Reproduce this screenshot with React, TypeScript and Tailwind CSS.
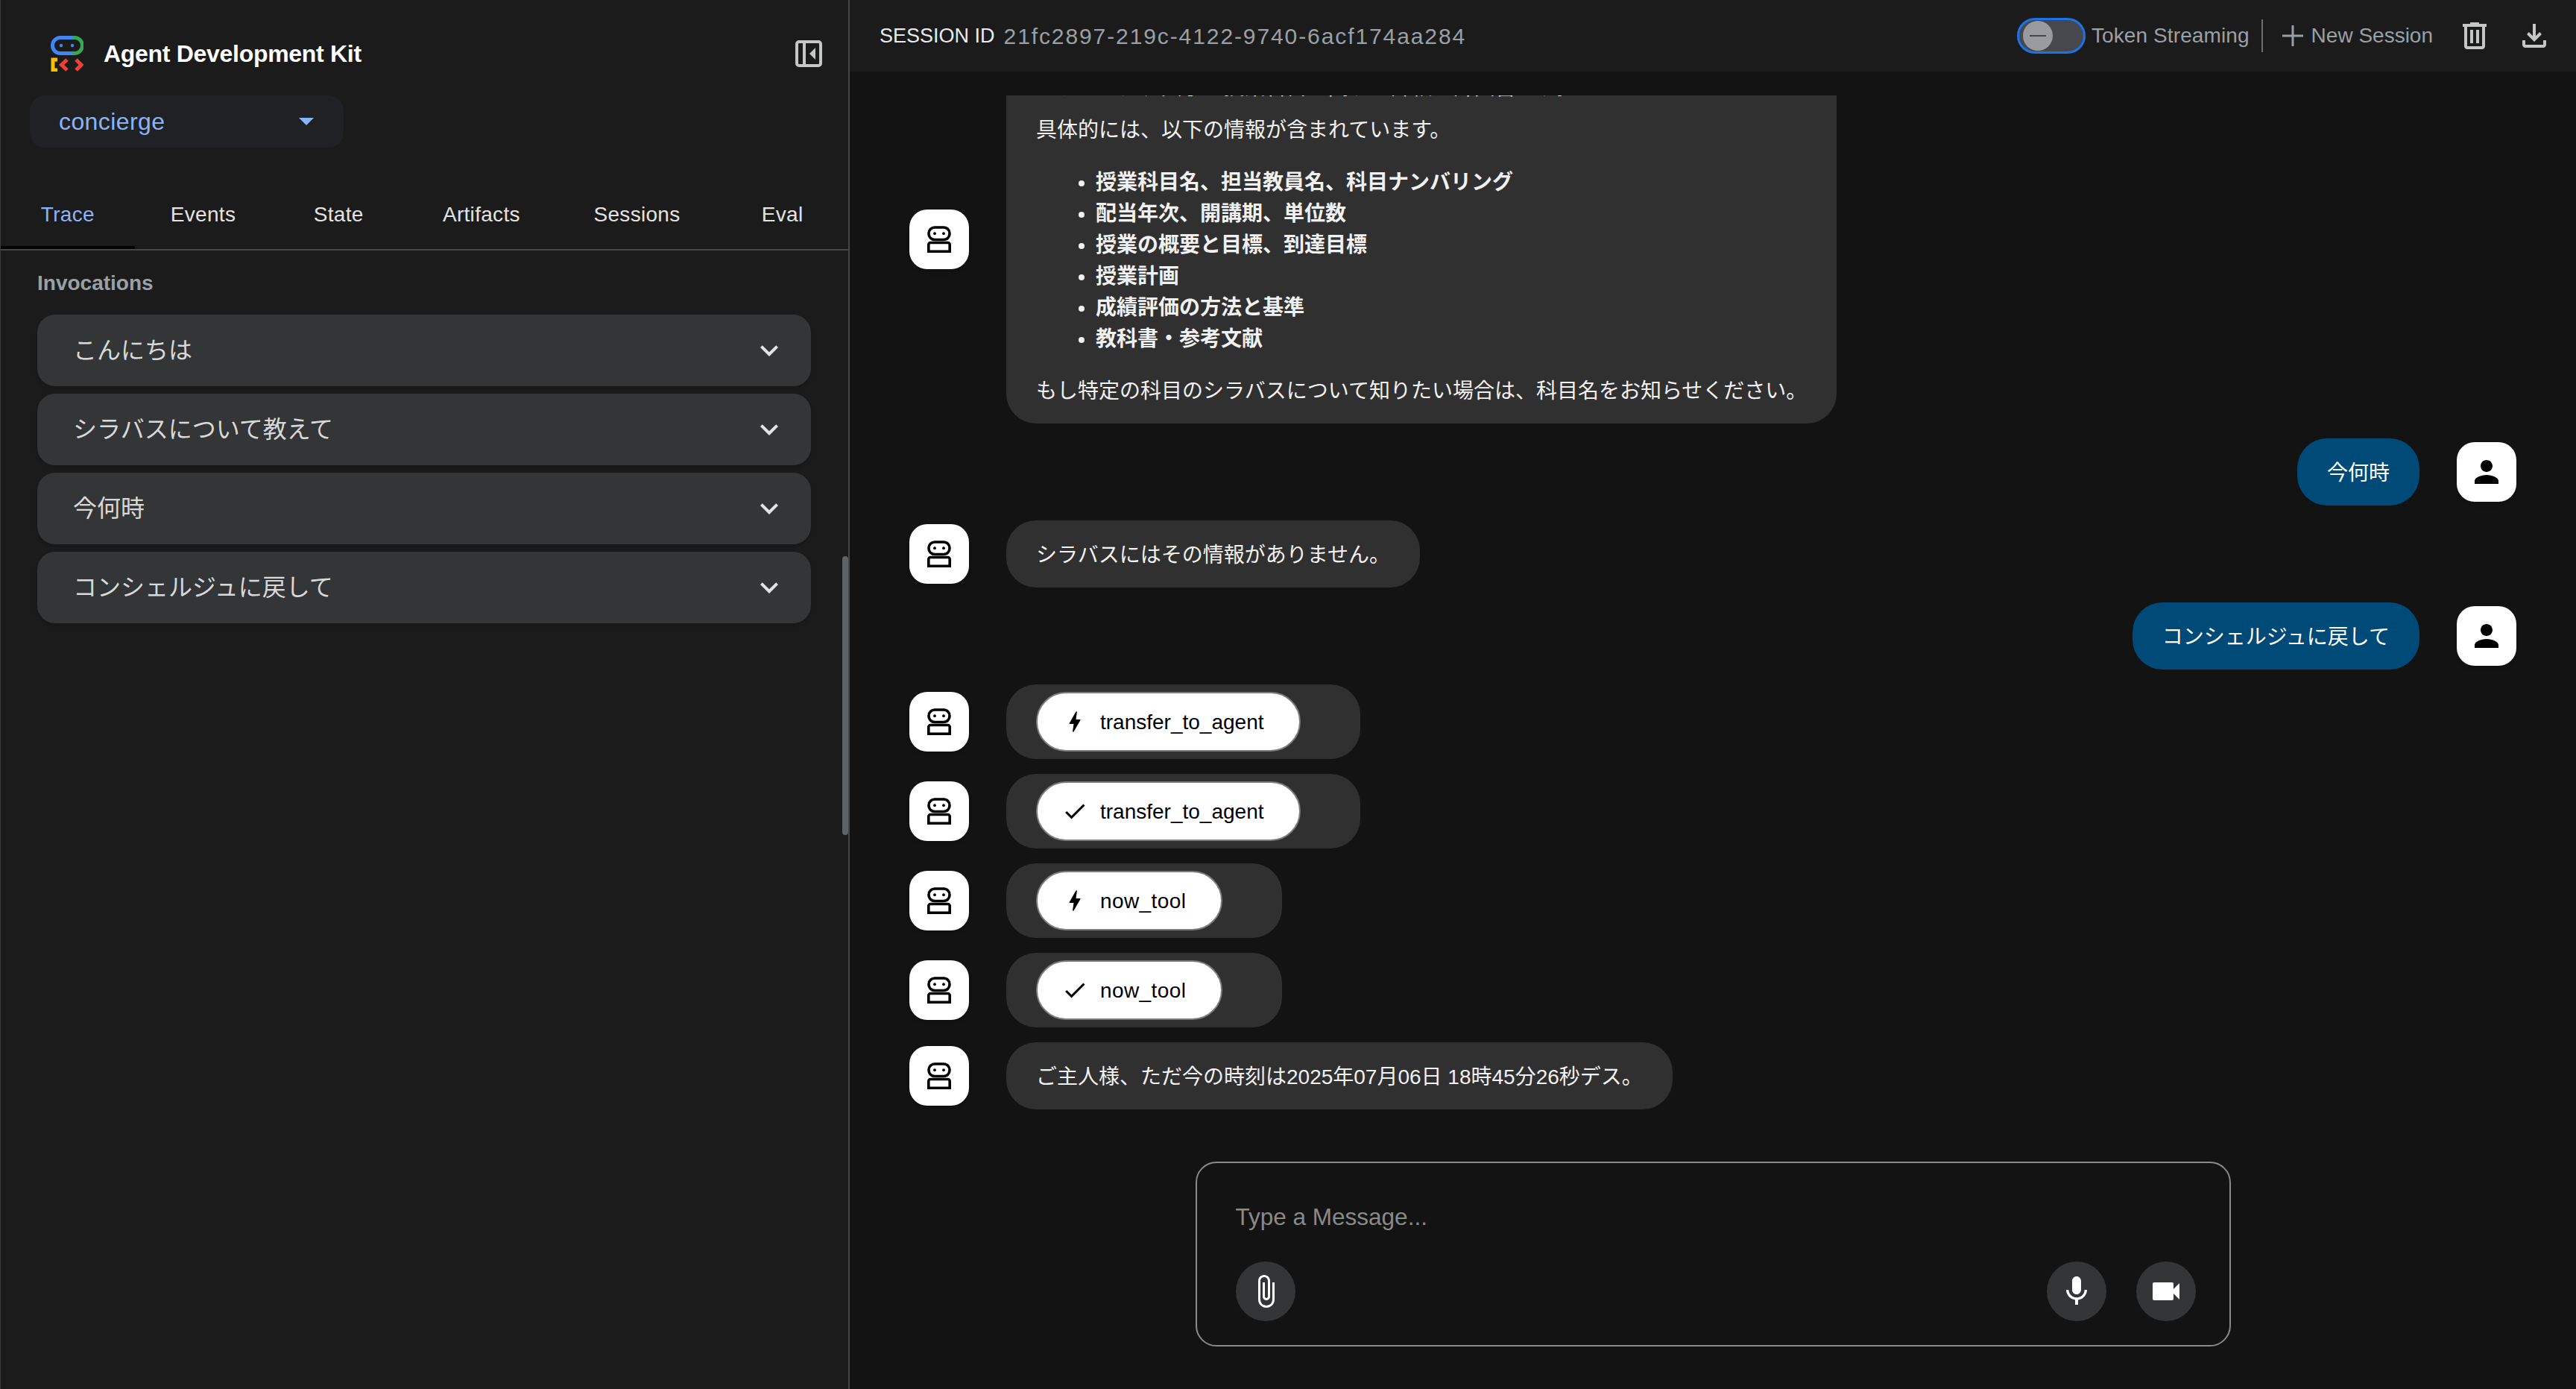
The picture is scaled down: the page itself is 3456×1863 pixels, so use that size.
const FONT = "font-['Liberation_Sans','Noto_Sans_CJK_JP',sans-serif]"

const tabs = [
  { label: "Trace", width: "w-[180px]", active: true },
  { label: "Events", width: "w-[184px]" },
  { label: "State", width: "w-[180px]" },
  { label: "Artifacts", width: "w-[204px]" },
  { label: "Sessions", width: "w-[214px]" },
  { label: "Eval", width: "w-[177px]" },
]

const invocations = ["こんにちは", "シラバスについて教えて", "今何時", "コンシェルジュに戻して"]

const syllabusItems = [
  "授業科目名、担当教員名、科目ナンバリング",
  "配当年次、開講期、単位数",
  "授業の概要と目標、到達目標",
  "授業計画",
  "成績評価の方法と基準",
  "教科書・参考文献",
]

function Logo() {
  return (
    <svg width="44" height="48" viewBox="0 0 44 48" fill="none" className="shrink-0">
      <path d="M30 2.5H13A10.5 10.5 0 0 0 13 23.5H30" stroke="#4285f4" strokeWidth="5" />
      <path d="M29 2.5H32A10.5 10.5 0 0 1 32 23.5H30" stroke="#34a853" strokeWidth="5" />
      <circle cx="14" cy="13" r="2.2" fill="#4285f4" />
      <circle cx="29" cy="13" r="2.2" fill="#4285f4" />
      <path d="M9 32H3V46H9" stroke="#fbbc04" strokeWidth="5" />
      <path d="M22 32L14.5 39L22 46" stroke="#ea4335" strokeWidth="5" />
      <path d="M34 32L41 39L34 46" stroke="#ea4335" strokeWidth="5" />
    </svg>
  )
}

function CollapseIcon() {
  return (
    <svg width="36" height="36" viewBox="0 0 36 36" fill="none">
      <rect x="2" y="2" width="32" height="32" rx="3" stroke="#c4c7c5" strokeWidth="4" />
      <path d="M12 2V34" stroke="#c4c7c5" strokeWidth="4" />
      <path d="M27 10V26L19 18Z" fill="#c4c7c5" />
    </svg>
  )
}

function BotAvatar() {
  return (
    <div className="flex h-[80px] w-[80px] shrink-0 items-center justify-center rounded-[24px] bg-white shadow-md">
      <svg width="32" height="36" viewBox="0 0 32 36" fill="none">
        <rect x="2" y="2" width="28" height="16.5" rx="8" stroke="black" strokeWidth="3.6" />
        <circle cx="10" cy="10.2" r="1.9" fill="black" />
        <circle cx="22" cy="10.2" r="1.9" fill="black" />
        <path d="M1.8 34.2V25a2.5 2.5 0 0 1 2.5-2.5H27.7a2.5 2.5 0 0 1 2.5 2.5V34.2Z" stroke="black" strokeWidth="3.6" />
      </svg>
    </div>
  )
}

function UserAvatar() {
  return (
    <div className="flex h-[80px] w-[80px] shrink-0 items-center justify-center rounded-[24px] bg-white shadow-md">
      <svg width="48" height="48" viewBox="0 0 24 24" fill="black">
        <path d="M12 12c2.21 0 4-1.79 4-4s-1.79-4-4-4-4 1.79-4 4 1.79 4 4 4zm0 2c-2.67 0-8 1.34-8 4v2h16v-2c0-2.66-5.33-4-8-4z" />
      </svg>
    </div>
  )
}

function AgentRow({ children }: { children: React.ReactNode }) {
  return (
    <div className="flex shrink-0 items-center gap-[50px] pl-[80px] pr-[80px]">
      <BotAvatar />
      {children}
    </div>
  )
}

function TextBubble({ text }: { text: string }) {
  return (
    <AgentRow>
      <div className="rounded-[40px] bg-[#303030] px-[40px] pb-[22px] pt-[26px] text-[28px] leading-[42px] text-[#f1f1f1]">{text}</div>
    </AgentRow>
  )
}

function UserRow({ text }: { text: string }) {
  return (
    <div className="flex shrink-0 items-center justify-end gap-[50px] pr-[80px]">
      <div className="rounded-[40px] bg-[#004a77] px-[40px] pb-[22px] pt-[26px] text-[28px] leading-[42px] text-white">{text}</div>
      <UserAvatar />
    </div>
  )
}

function ToolRow({ name, done }: { name: string; done?: boolean }) {
  return (
    <AgentRow>
      <div className="rounded-[40px] bg-[#303030] py-[10px] pl-[40px] pr-[80px]">
        <div className="flex h-[80px] items-center gap-[16px] rounded-[40px] border-2 border-[#7d7d7d] bg-white pl-[32px] pr-[47px] text-[28px] text-black">
          <svg width="36" height="36" viewBox="0 0 24 24" fill="black" className="shrink-0">
            {done ? (
              <path d="M9 16.17L4.83 12l-1.42 1.41L9 19 21 7l-1.41-1.41z" />
            ) : (
              <path d="M11 21h-1l1-7H7.5c-.58 0-.57-.32-.38-.66.19-.34.05-.08.07-.12C8.48 10.94 10.42 7.54 13 3h1l-1 7h3.5c.49 0 .56.33.47.51l-.07.15C12.96 17.55 11 21 11 21z" />
            )}
          </svg>
          <span className={`pt-[2px] ${name === "now_tool" ? "tracking-[0.4px]" : ""}`}>{name}</span>
        </div>
      </div>
    </AgentRow>
  )
}

function RoundButton({ d }: { d: string }) {
  return (
    <div className="flex h-[80px] w-[80px] items-center justify-center rounded-full bg-[#333537]">
      <svg width="48" height="48" viewBox="0 0 24 24" fill="white">
        <path d={d} />
      </svg>
    </div>
  )
}

function Sidebar() {
  return (
    <aside className="relative flex h-full w-[1140px] shrink-0 flex-col border-l border-r-2 border-l-[#3a3a3a] border-r-[#444746] bg-[#1b1b1b]">
      <div className="flex items-center pl-[67px] pr-[35px] pt-[48px]">
        <Logo />
        <span className="ml-[27px] pt-[1px] text-[32px] font-bold leading-[47px] tracking-[-0.3px] text-white">Agent Development Kit</span>
        <div className="ml-auto">
          <CollapseIcon />
        </div>
      </div>

      <div className="ml-[39px] mt-[32px] flex h-[70px] w-[421px] items-center justify-between rounded-[20px] bg-[#202124] pl-[39px] pr-[40px]">
        <span className="text-[32px] tracking-[0.4px] text-[#8ab4f8]">concierge</span>
        <svg width="20" height="10" viewBox="0 0 20 10" fill="#8ab4f8">
          <path d="M0 0H20L10 10Z" />
        </svg>
      </div>

      <div className="mt-[64px] flex h-[74px] items-start border-b-2 border-[#444746]">
        {tabs.map((tab) => (
          <div
            key={tab.label}
            className={`relative flex h-[72px] items-center justify-center pb-[20px] text-[28px] tracking-[0.3px] ${tab.width} ${
              tab.active ? "text-[#8ab4f8]" : "text-[#e3e3e3]"
            }`}
          >
            {tab.label}
            {tab.active && <div className="absolute bottom-0 left-0 h-[4px] w-full bg-black" />}
          </div>
        ))}
      </div>

      <div className="pl-[49px] pr-[50px] pt-[28px]">
        <div className="text-[28px] font-bold leading-[32px] text-[#9aa0a6]">Invocations</div>
        <div className="mt-[26px] flex flex-col gap-[10px]">
          {invocations.map((item) => (
            <div key={item} className="flex h-[96px] items-center justify-between rounded-[24px] bg-[#333537] pl-[48px] pr-[32px] shadow-md">
              <span className="text-[32px] text-[#d8d8d8]">{item}</span>
              <svg width="48" height="48" viewBox="0 0 24 24" fill="#e3e3e3">
                <path d="M7.41 8.59 12 13.17l4.59-4.58L18 10l-6 6-6-6z" />
              </svg>
            </div>
          ))}
        </div>
      </div>

      <div className="absolute right-0 top-[746px] h-[374px] w-[8px] rounded-full bg-[#5f6368]" />
    </aside>
  )
}

function Toolbar() {
  return (
    <header className="flex h-[96px] shrink-0 items-center bg-[#1b1b1b] pl-[40px] pr-[32px]">
      <span className="text-[27px] text-[#e8eaed]">SESSION ID</span>
      <span className="ml-[12px] text-[30px] tracking-[1.9px] text-[#9aa0a6]">21fc2897-219c-4122-9740-6acf174aa284</span>

      <div className="ml-auto flex items-center">
        <div className="flex h-[48px] w-[92px] items-center rounded-full border-[3px] border-[#1a73e8] bg-[#47484d] pl-[5px]">
          <div className="flex h-[40px] w-[40px] items-center justify-center rounded-full bg-[#9a9ba0]">
            <div className="h-[2px] w-[22px] bg-[#47484d]" />
          </div>
        </div>
        <span className="ml-[8px] text-[28px] tracking-[0.1px] text-[#9aa0a6]">Token Streaming</span>
        <div className="ml-[16px] h-[44px] w-[2px] bg-[#6b6e72]" />
        <svg width="30" height="30" viewBox="0 0 30 30" fill="#9aa0a6" className="ml-[25px]">
          <path d="M13.5 1H16.5V13.5H29V16.5H16.5V29H13.5V16.5H1V13.5H13.5Z" />
        </svg>
        <span className="ml-[10px] text-[28px] text-[#9aa0a6]">New Session</span>
        <svg width="48" height="48" viewBox="0 -960 960 960" fill="#c4c7c5" className="ml-[32px]">
          <path d="M280-120q-33 0-56.5-23.5T200-200v-520h-40v-80h200v-40h240v40h200v80h-40v520q0 33-23.5 56.5T680-120H280Zm400-600H280v520h400v-520ZM360-280h80v-360h-80v360Zm160 0h80v-360h-80v360Z" />
        </svg>
        <svg width="48" height="48" viewBox="0 -960 960 960" fill="#c4c7c5" className="ml-[32px]">
          <path d="M480-320 280-520l56-58 104 104v-326h80v326l104-104 56 58-200 200ZM240-160q-33 0-56.5-23.5T160-240v-120h80v120h480v-120h80v120q0 33-23.5 56.5T720-160H240Z" />
        </svg>
      </div>
    </header>
  )
}

function Composer() {
  return (
    <div className="mx-auto mb-[57px] flex h-[248px] w-[1389px] shrink-0 flex-col justify-between rounded-[28px] border-2 border-[#8a8a8a] pb-[32px] pl-[52px] pr-[45px] pt-[50px]">
      <span className="text-[31.5px] leading-[44px] text-[#8a8a8a]">Type a Message...</span>
      <div className="flex items-center justify-between">
        <RoundButton d="M16.5 6v11.5c0 2.21-1.79 4-4 4s-4-1.79-4-4V5c0-1.38 1.12-2.5 2.5-2.5s2.5 1.12 2.5 2.5v10.5c0 .55-.45 1-1 1s-1-.45-1-1V6H10v9.5c0 1.38 1.12 2.5 2.5 2.5s2.5-1.12 2.5-2.5V5c0-2.21-1.79-4-4-4S7 2.79 7 5v12.5c0 3.04 2.46 5.5 5.5 5.5s5.5-2.46 5.5-5.5V6h-1.5z" />
        <div className="flex gap-[40px]">
          <RoundButton d="M12 14c1.66 0 2.99-1.34 2.99-3L15 5c0-1.66-1.34-3-3-3S9 3.34 9 5v6c0 1.66 1.34 3 3 3zm5.3-3c0 3-2.54 5.1-5.3 5.1S6.7 14 6.7 11H5c0 3.41 2.72 6.23 6 6.72V21h2v-3.28c3.28-.48 6-3.3 6-6.72h-1.7z" />
          <RoundButton d="M17 10.5V7c0-.55-.45-1-1-1H4c-.55 0-1 .45-1 1v10c0 .55.45 1 1 1h12c.55 0 1-.45 1-1v-3.5l4 4v-11l-4 4z" />
        </div>
      </div>
    </div>
  )
}

export default function App() {
  return (
    <div className={`flex h-[1863px] w-[3456px] overflow-hidden bg-[#131313] ${FONT}`}>
      <Sidebar />
      <main className="flex h-full min-w-0 flex-1 flex-col">
        <Toolbar />
        <div className="mb-[70px] mt-[32px] flex min-h-0 flex-1 flex-col justify-end gap-[20px] overflow-hidden">
          <AgentRow>
            <div className="w-[1114px] rounded-[40px] bg-[#303030] px-[40px] pb-[22px] pt-[24px] text-[28px] leading-[42px] text-[#f1f1f1]">
              <p className="mb-[15px] whitespace-nowrap">シラバスは、大学の授業科目に関する詳細な計画書です。</p>
              <p className="mb-[28px] whitespace-nowrap">具体的には、以下の情報が含まれています。</p>
              <ul className="mb-[28px] list-disc pl-[80px] font-bold">
                {syllabusItems.map((item) => (
                  <li key={item}>{item}</li>
                ))}
              </ul>
              <p className="whitespace-nowrap">もし特定の科目のシラバスについて知りたい場合は、科目名をお知らせください。</p>
            </div>
          </AgentRow>
          <UserRow text="今何時" />
          <TextBubble text="シラバスにはその情報がありません。" />
          <UserRow text="コンシェルジュに戻して" />
          <ToolRow name="transfer_to_agent" />
          <ToolRow name="transfer_to_agent" done />
          <ToolRow name="now_tool" />
          <ToolRow name="now_tool" done />
          <TextBubble text="ご主人様、ただ今の時刻は2025年07月06日 18時45分26秒デス。" />
        </div>
        <Composer />
      </main>
    </div>
  )
}
